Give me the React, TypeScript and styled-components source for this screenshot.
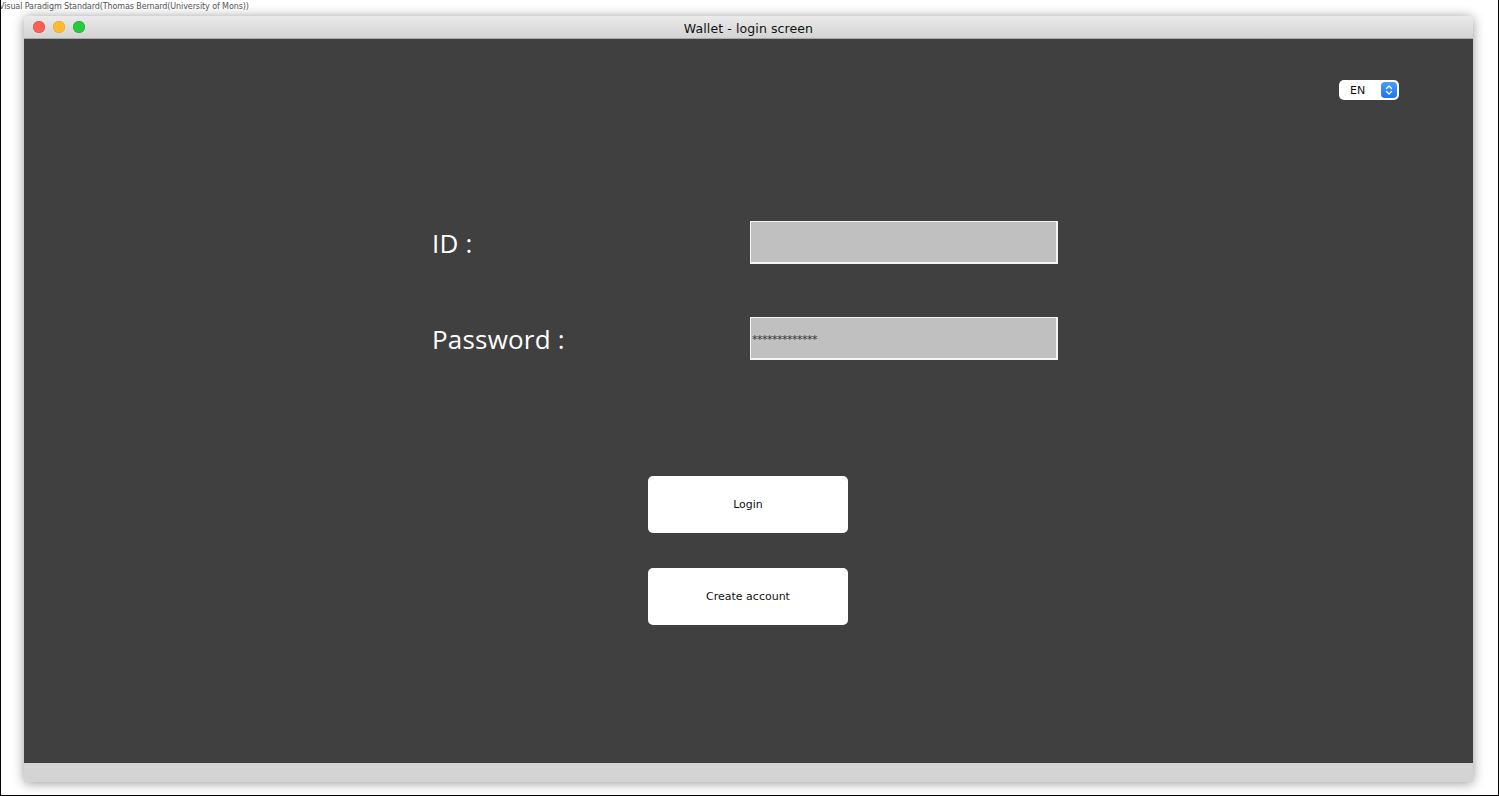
import styled, { createGlobalStyle } from 'styled-components';

const GlobalStyle = createGlobalStyle`
  html, body {
    margin: 0;
    padding: 0;
    background: #ffffff;
  }
`;

const Page = styled.div`
  box-sizing: border-box;
  width: 1499px;
  height: 796px;
  border: 1px solid #000000;
  border-top: none;
  background: #ffffff;
  overflow: hidden;
  font-family: 'Open Sans', 'DejaVu Sans', sans-serif;
`;

const Caption = styled.div`
  height: 16px;
  margin-left: -2px;
  font-size: 8px;
  line-height: 14px;
  color: #555555;
  font-family: 'DejaVu Sans', sans-serif;
  letter-spacing: -0.1px;
`;

const Window = styled.div`
  width: 1449px;
  margin-left: 23px;
  display: flex;
  flex-direction: column;
  box-shadow: 0 1px 12px rgba(0, 0, 0, 0.42);
  border-radius: 5px 5px 0 0;
`;

const TitleBar = styled.div`
  position: relative;
  height: 22px;
  display: flex;
  align-items: center;
  justify-content: center;
  background: linear-gradient(#ebebeb, #d3d3d3);
  border-bottom: 1px solid #a8a8a8;
  border-radius: 5px 5px 0 0;
`;

const Lights = styled.div`
  position: absolute;
  left: 9px;
  top: 5px;
  display: flex;
  gap: 8px;
`;

const Light = styled.span<{ $color: string; $edge: string }>`
  width: 12px;
  height: 12px;
  border-radius: 50%;
  background: ${(p) => p.$color};
  box-shadow: inset 0 0 0 0.5px ${(p) => p.$edge};
`;

const Title = styled.div`
  font-size: 12.5px;
  color: #111111;
  font-family: 'DejaVu Sans', sans-serif;
  letter-spacing: 0.1px;
  padding-top: 2px;
`;

const Content = styled.div`
  height: 724px;
  background: #404040;
  display: flex;
  flex-direction: column;
`;

const TopRow = styled.div`
  display: flex;
  justify-content: flex-end;
  padding: 41px 74px 0 0;
`;

const Select = styled.div`
  box-sizing: border-box;
  width: 60px;
  height: 20px;
  background: #ffffff;
  border-radius: 5px;
  display: flex;
  align-items: center;
  justify-content: space-between;
  padding: 0 2px 0 11px;
  font-size: 11px;
  color: #111111;
  font-family: 'DejaVu Sans', sans-serif;
`;

const Stepper = styled.div`
  width: 16px;
  height: 16px;
  border-radius: 4px;
  background: linear-gradient(#4a9bff, #1e74f0);
  display: flex;
  align-items: center;
  justify-content: center;
`;

const Form = styled.div`
  display: grid;
  grid-template-columns: 318px 308px;
  row-gap: 53px;
  margin: 121px 0 0 408px;
`;

const Label = styled.div`
  height: 43px;
  display: flex;
  align-items: center;
  font-size: 26px;
  color: #ffffff;
  letter-spacing: 0.2px;
`;

const Field = styled.div`
  box-sizing: border-box;
  height: 43px;
  background: #c0c0c0;
  border: 1px solid #f4f4f4;
  border-right-width: 2px;
  border-bottom-width: 2px;
  display: flex;
  align-items: center;
  padding: 3px 0 0 1px;
  font-size: 11px;
  color: #333333;
  font-family: 'DejaVu Sans', sans-serif;
  letter-spacing: -0.5px;
`;

const Buttons = styled.div`
  display: flex;
  flex-direction: column;
  gap: 35px;
  margin: 116px 0 0 624px;
`;

const Button = styled.div`
  width: 200px;
  height: 57px;
  background: #ffffff;
  border-radius: 5px;
  display: flex;
  align-items: center;
  justify-content: center;
  font-size: 11px;
  color: #111111;
  font-family: 'DejaVu Sans', sans-serif;
`;

const Footer = styled.div`
  height: 19px;
  background: #d4d4d4;
`;

export default function App() {
  return (
    <>
      <GlobalStyle />
      <Page>
        <Caption>Visual Paradigm Standard(Thomas Bernard(University of Mons))</Caption>
        <Window>
          <TitleBar>
            <Lights>
              <Light $color="#fc5f57" $edge="#e0443e" />
              <Light $color="#fdbc2e" $edge="#dea123" />
              <Light $color="#28c840" $edge="#1aab29" />
            </Lights>
            <Title>Wallet - login screen</Title>
          </TitleBar>
          <Content>
            <TopRow>
              <Select>
                EN
                <Stepper>
                  <svg width="10" height="12" viewBox="0 0 10 12">
                    <path d="M2.5 4.5 L5 2 L7.5 4.5 M2.5 7.5 L5 10 L7.5 7.5" stroke="#ffffff" strokeWidth="1.4" fill="none" strokeLinecap="round" strokeLinejoin="round" />
                  </svg>
                </Stepper>
              </Select>
            </TopRow>
            <Form>
              <Label>ID :</Label>
              <Field />
              <Label>Password :</Label>
              <Field>*************</Field>
            </Form>
            <Buttons>
              <Button>Login</Button>
              <Button>Create account</Button>
            </Buttons>
          </Content>
          <Footer />
        </Window>
      </Page>
    </>
  );
}
